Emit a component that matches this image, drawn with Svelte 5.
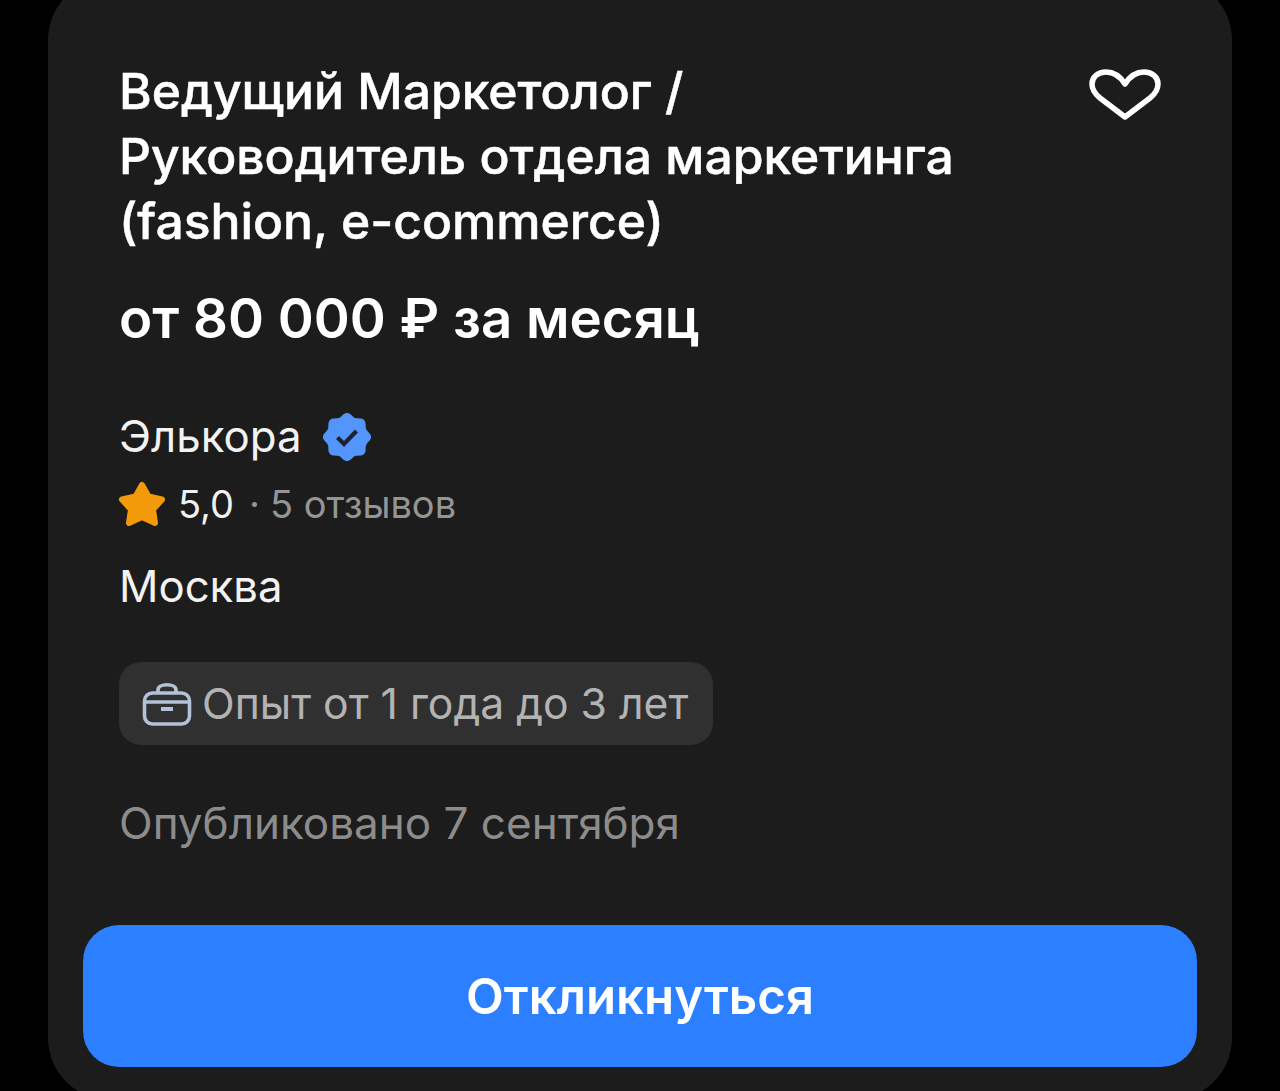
<script>
  const job = {
    title: ['Ведущий Маркетолог /', 'Руководитель отдела маркетинга', '(fashion, e-commerce)'],
    salary: 'от 80 000 ₽ за месяц',
    company: 'Элькора',
    rating: '5,0',
    reviews: '5 отзывов',
    city: 'Москва',
    experience: 'Опыт от 1 года до 3 лет',
    published: 'Опубликовано 7 сентября'
  };

  // scalloped badge outline, 8 soft lobes
  const badgePath = Array.from({ length: 96 }, (_, i) => {
    const a = (i / 96) * Math.PI * 2 - Math.PI / 2;
    const r = 22.4 + 1.7 * Math.cos(a * 8 + Math.PI * 4);
    return `${(24 + r * Math.cos(a)).toFixed(2)},${(24 + r * Math.sin(a)).toFixed(2)}`;
  }).join(' ');
</script>

<div class="page">
  <div class="card">
    <div class="body">
      <div class="head">
        <h1 class="title">
          {#each job.title as line}
            <span>{line}</span>
          {/each}
        </h1>
        <svg class="heart" width="74" height="56" viewBox="0 0 74 56" fill="none">
          <path d="M37 51 L12 32 C7 28 4 24 4 18 C4 11 10 6 18 6 C26 6 32 10 37 18 C42 10 48 6 56 6 C64 6 70 11 70 18 C70 24 67 28 62 32 Z" stroke="#fff" stroke-width="5.500" stroke-linejoin="round"/>
        </svg>
      </div>

      <div class="salary">{job.salary}</div>

      <div class="company">
        <span>{job.company}</span>
        <svg width="48" height="48" viewBox="0 0 48 48">
          <polygon points={badgePath} fill="#5495fb"/>
          <path d="M14.500 24.500 L21 31 L33.500 18" fill="none" stroke="#1c2333" stroke-width="4.200"/>
        </svg>
      </div>

      <div class="rating">
        <svg width="50" height="48" viewBox="0 0 50 48">
          <path d="M25 5 L31.500 16.500 L45 19.500 L36 29.500 L38 43 L25 37 L12 43 L14 29.500 L5 19.500 L18.500 16.500 Z" fill="#f39a0b" stroke="#f39a0b" stroke-width="6" stroke-linejoin="round"/>
        </svg>
        <span class="score">{job.rating}</span>
        <span class="reviews"><i>·</i>{job.reviews}</span>
      </div>

      <div class="city">{job.city}</div>

      <div class="tag">
        <svg width="50" height="46" viewBox="0 0 50 46" fill="none" stroke="#b3c2d6" stroke-width="3.600">
          <rect x="2.500" y="12" width="45" height="31" rx="8"/>
          <path d="M3 21 H47"/>
          <path d="M16 12 V9 C16 2 34 2 34 9 V12"/>
          <path d="M19 28 H31" stroke-width="4"/>
        </svg>
        <span>{job.experience}</span>
      </div>

      <div class="published">{job.published}</div>
    </div>

    <button class="apply">Откликнуться</button>
  </div>
</div>

<style>
  :global(body) {
    margin: 0;
    background: #000;
  }

  .page {
    height: 1091px;
    overflow: hidden;
    padding: 0 48px;
    box-sizing: border-box;
    font-family: Inter, "Liberation Sans", sans-serif;
  }

  .card {
    margin-top: -22px;
    height: 1122px;
    box-sizing: border-box;
    background: #1c1c1c;
    border-radius: 62px;
    padding: 0 35px;
    display: flex;
    flex-direction: column;
  }

  .body {
    padding: 0 36px;
    flex: 1;
  }

  .head {
    display: flex;
    justify-content: space-between;
    align-items: flex-start;
    padding-top: 81px;
  }

  .title {
    margin: 0;
    font-size: 49.800px;
    line-height: 65px;
    font-weight: 500;
    -webkit-text-stroke: 0.5px #fff;
    color: #fff;
  }

  .title span {
    display: block;
  }

  .heart {
    margin: 7px -1px 0 0;
  }

  .salary {
    margin-top: 29px;
    font-size: 54.600px;
    line-height: 70px;
    font-weight: 600;
    color: #fff;
  }

  .company {
    margin-top: 56px;
    display: flex;
    align-items: center;
    gap: 21px;
    font-size: 43.800px;
    line-height: 56px;
    color: #f2f2f2;
  }

  .rating {
    margin-top: 12px;
    margin-left: -2px;
    display: flex;
    align-items: center;
    gap: 11px;
    font-size: 38px;
    line-height: 54px;
  }

  .score {
    color: #f0f0f0;
  }

  .reviews {
    color: #959595;
  }

  .reviews i {
    font-style: normal;
    margin: 0 10px 0 4px;
  }

  .city {
    margin-top: 28px;
    font-size: 43.700px;
    line-height: 56px;
    color: #f2f2f2;
  }

  .tag {
    margin-top: 47px;
    width: fit-content;
    height: 83px;
    box-sizing: border-box;
    padding: 0 25px 0 23px;
    display: flex;
    align-items: center;
    gap: 10px;
    background: #303030;
    border-radius: 22px;
    font-size: 42.700px;
    color: #b3b3b3;
  }

  .published {
    margin-top: 50px;
    font-size: 44px;
    line-height: 56px;
    color: #8c8c8c;
  }

  .apply {
    margin-bottom: 33px;
    height: 142px;
    border: none;
    border-radius: 36px;
    background: #2c7fff;
    color: #fff;
    font-family: inherit;
    font-size: 49.200px;
    font-weight: 600;
    padding-bottom: 2px;
  }
</style>
